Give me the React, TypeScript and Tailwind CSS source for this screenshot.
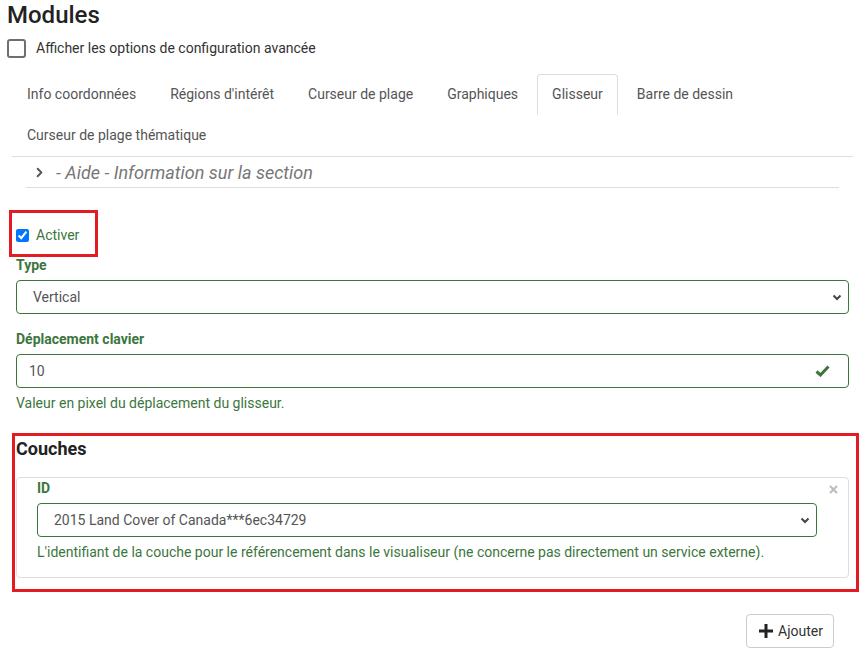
import { ChevronRight } from "lucide-react";

const TABS_ROW = [
  "Info coordonnées",
  "Régions d'intérêt",
  "Curseur de plage",
  "Graphiques",
  "Glisseur",
  "Barre de dessin",
  "Curseur de plage thématique",
];

function ChevronDown({ className = "" }: { className?: string }) {
  return (
    <svg width="10" height="7" viewBox="0 0 10 7" className={className}>
      <polyline points="1.5,1.5 5,5 8.5,1.5" fill="none" stroke="#444" strokeWidth="2" />
    </svg>
  );
}

function Label({ children }: { children: React.ReactNode }) {
  return <div className="text-[14px] leading-[20px] font-bold text-[#3c763d]">{children}</div>;
}

function FakeSelect({ value, className = "" }: { value: string; className?: string }) {
  return (
    <div
      className={`flex h-[34px] items-center justify-between rounded-[4px] border border-[#3c763d] pl-[16px] pr-[6px] text-[14px] text-[#555] ${className}`}
    >
      <span>{value}</span>
      <ChevronDown />
    </div>
  );
}

export default function App() {
  return (
    <div className="relative h-[657px] w-[868px] overflow-hidden bg-white font-['Roboto',sans-serif] text-[14px] text-[#333]">
      {/* Header */}
      <div className="px-[7px] pt-px">
        <h1 className="text-[24px] leading-[28px] font-medium text-[#222]">Modules</h1>
        <div className="mt-[10px] flex h-[18px] items-center">
          <div className="h-[19px] w-[19px] rounded-[3px] border-2 border-[#6f6f6f]" />
          <span className="ml-[10px] text-[#333]">Afficher les options de configuration avancée</span>
        </div>
      </div>

      {/* Tabs */}
      <div className="ml-[12px] mt-[17px] flex w-[841px] flex-wrap border-b border-[#ddd]">
        {TABS_ROW.map((t) => (
          <div
            key={t}
            className={`mr-[4px] flex h-[41px] items-center rounded-t-[4px] border px-[14px] text-[#555] ${
              t === "Glisseur" ? "border-[#ddd] border-b-transparent bg-white" : "border-transparent"
            }`}
          >
            {t}
          </div>
        ))}
      </div>

      {/* Aide */}
      <div className="ml-[26px] flex h-[31px] w-[813px] items-center border-b border-[#ddd]">
        <ChevronRight size={15} strokeWidth={3} className="ml-[6px] text-[#555]" />
        <span className="ml-[9px] text-[18px] italic text-[#777]">- Aide - Information sur la section</span>
      </div>

      {/* Form */}
      <div className="ml-[16px] w-[833px]">
        <div className="mt-[37px] flex h-[20px] items-center">
          <input type="checkbox" defaultChecked className="m-0 h-[13px] w-[13px] accent-[#0075ff]" />
          <span className="ml-[7px] text-[#3c763d]">Activer</span>
        </div>

        <div className="mt-[10px]">
          <Label>Type</Label>
        </div>
        <FakeSelect value="Vertical" className="mt-[5px]" />

        <div className="mt-[15px]">
          <Label>Déplacement clavier</Label>
        </div>
        <div className="mt-[5px] flex h-[34px] items-center justify-between rounded-[4px] border border-[#3c763d] pl-[12px] pr-[18px] text-[#555]">
          <span>10</span>
          <svg width="15" height="12" viewBox="0 0 15 12">
            <path d="M1.5 6.5 L5.5 10 L13.5 1.5" fill="none" stroke="#3c763d" strokeWidth="3" />
          </svg>
        </div>
        <div className="mt-[5px] leading-[20px] text-[#3c763d]">Valeur en pixel du déplacement du glisseur.</div>

        <h2 className="mt-[24px] text-[18px] leading-[24px] font-bold text-[#222]">Couches</h2>

        <div className="relative mt-[16px] rounded-[4px] border border-[#ddd] pb-[15px] pl-[20px]">
          <span className="absolute right-[10px] top-[7px] text-[#bbb]">
            <svg width="9" height="9" viewBox="0 0 9 9">
              <path d="M1 1 L8 8 M8 1 L1 8" stroke="#bbb" strokeWidth="2" />
            </svg>
          </span>
          <Label>ID</Label>
          <FakeSelect value="2015 Land Cover of Canada***6ec34729" className="mt-[5px] w-[780px]" />
          <div className="mt-[5px] leading-[20px] text-[#3c763d]">
            L'identifiant de la couche pour le référencement dans le visualiseur (ne concerne pas directement un service externe).
          </div>
        </div>

        <div className="mt-[36px] flex justify-end pr-[15px]">
          <div className="flex h-[34px] w-[88px] items-center rounded-[4px] border border-[#ccc] pl-[12px] text-[#333]">
            <svg width="14" height="14" viewBox="0 0 14 14">
              <path d="M5.5 0 H8.5 V5.5 H14 V8.5 H8.5 V14 H5.5 V8.5 H0 V5.5 H5.5 Z" fill="#222" />
            </svg>
            <span className="ml-[5px]">Ajouter</span>
          </div>
        </div>
      </div>

      {/* Annotation boxes */}
      <div className="absolute left-[9px] top-[210px] h-[47px] w-[89px] border-[3px] border-[#e31b23]" />
      <div className="absolute left-[12px] top-[433px] h-[159px] w-[847px] border-[3px] border-[#e31b23]" />
    </div>
  );
}
